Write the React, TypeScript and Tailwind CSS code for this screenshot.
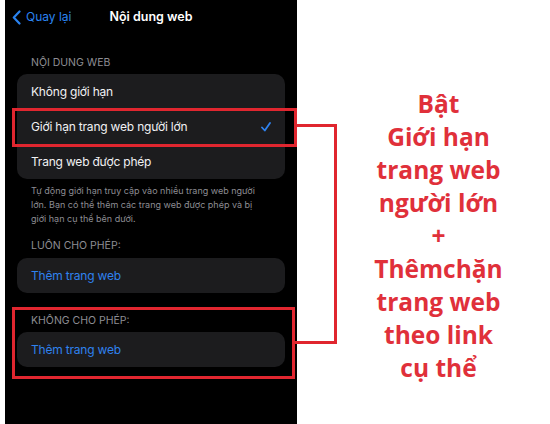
import React from 'react';

const ios = { fontFamily: 'Inter, "Noto Sans", "DejaVu Sans", sans-serif' };
const note = { fontFamily: '"Open Sans", "Noto Sans", sans-serif' };

const Label: React.FC<{ text: string; className?: string }> = ({ text, className }) => (
    <p className={`px-[26px] text-[10.5px] leading-[14px] uppercase text-[#8d8d93] ${className || ''}`}>{text}</p>
);

const Row: React.FC<{ text: string; checked?: boolean; blue?: boolean }> = ({ text, checked, blue }) => (
    <div className="h-[35px] flex items-center justify-between pl-[14px] pr-[14px]">
        <span className={`text-[12px] tracking-[-0.2px] whitespace-nowrap ${blue ? 'text-[#2f82ee]' : 'text-[#f1f1f3]'}`}>{text}</span>
        {checked && (
            <svg width="10" height="10" viewBox="0 0 10 10" fill="none" stroke="#2f82ee" strokeWidth="1.8" strokeLinecap="round" strokeLinejoin="round">
                <path d="M1 5.5 L3.8 8.5 L9 1" />
            </svg>
        )}
    </div>
);

const App: React.FC = () => {
    return (
        <div className="relative w-[550px] h-[424px] bg-white flex overflow-hidden">
            {/* phone screenshot */}
            <div className="ml-[5px] w-[292px] h-full bg-black" style={ios}>
                <header className="h-[34px] relative flex items-center justify-center">
                    <div className="absolute left-[7px] top-0 h-full flex items-center gap-[5px] text-[#2a83f0]">
                        <svg width="9" height="15" viewBox="0 0 9 15" fill="none" stroke="currentColor" strokeWidth="2.2" strokeLinecap="round" strokeLinejoin="round">
                            <path d="M7.5 1.5 L1.8 7.5 L7.5 13.5" />
                        </svg>
                        <span className="text-[12px]">Quay lại</span>
                    </div>
                    <h1 className="text-[12.5px] font-semibold text-white">Nội dung web</h1>
                </header>

                <Label text="Nội dung web" className="mt-[22px] mb-[4px]" />
                <div className="mx-[12px] rounded-[10px] bg-[#1c1c1e]">
                    <Row text="Không giới hạn" />
                    <Row text="Giới hạn trang web người lớn" checked />
                    <Row text="Trang web được phép" />
                </div>
                <p className="mt-[5px] px-[26px] text-[9px] leading-[14px] whitespace-nowrap text-[#8d8d93]">
                    Tự động giới hạn truy cập vào nhiều trang web người<br />
                    lớn. Bạn có thể thêm các trang web được phép và bị<br />
                    giới hạn cụ thể bên dưới.
                </p>

                <Label text="Luôn cho phép:" className="mt-[13px] mb-[5px]" />
                <div className="mx-[12px] rounded-[10px] bg-[#1c1c1e]">
                    <Row text="Thêm trang web" blue />
                </div>

                <Label text="Không cho phép:" className="mt-[21px] mb-[4px]" />
                <div className="mx-[12px] rounded-[10px] bg-[#1c1c1e]">
                    <Row text="Thêm trang web" blue />
                </div>
            </div>

            {/* note */}
            <div className="flex-1 pt-[87px] pl-[30px] flex flex-col items-center text-[#e0303a] text-[24.5px] leading-[33px] font-bold" style={note}>
                <p>Bật</p>
                <p>Giới hạn</p>
                <p>trang web</p>
                <p>người lớn</p>
                <p>+</p>
                <p>Thêmchặn</p>
                <p>trang web</p>
                <p>theo link</p>
                <p>cụ thể</p>
            </div>

            {/* annotations */}
            <div className="absolute left-[12px] top-[108px] w-[285px] h-[39px] border-[3px] border-[#e0262f]" />
            <div className="absolute left-[12px] top-[307px] w-[283px] h-[72px] border-[3px] border-[#e0262f]" />
            <div className="absolute left-[295px] top-[124px] w-[42px] h-[220px] border-[3px] border-l-0 border-[#e0262f]" />
        </div>
    );
};

export default App;
